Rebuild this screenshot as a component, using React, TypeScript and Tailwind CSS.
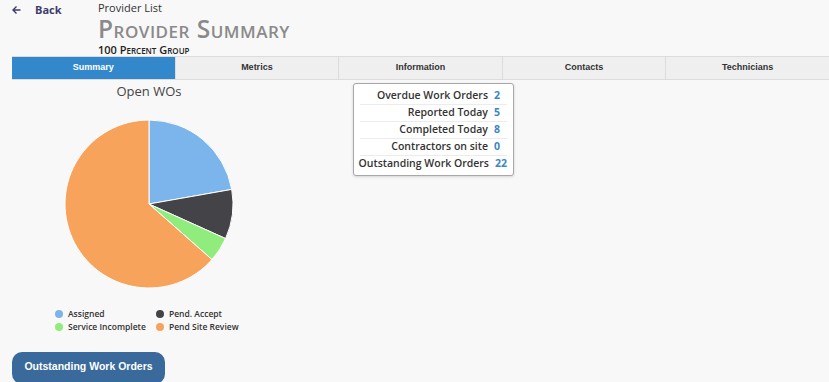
import React from "react";

type Slice = { label: string; value: number; color: string };

const slices: Slice[] = [
  { label: "Assigned", value: 14, color: "#7cb5ec" },
  { label: "Pend. Accept", value: 6, color: "#434348" },
  { label: "Service Incomplete", value: 3, color: "#90ed7d" },
  { label: "Pend Site Review", value: 40, color: "#f7a35c" },
];

const stats = [
  { label: "Overdue Work Orders", value: 2 },
  { label: "Reported Today", value: 5 },
  { label: "Completed Today", value: 8 },
  { label: "Contractors on site", value: 0 },
  { label: "Outstanding Work Orders", value: 22 },
];

const tabs = ["Summary", "Metrics", "Information", "Contacts", "Technicians"];

const PieChart: React.FC = () => {
  const cx = 90;
  const cy = 90;
  const r = 84;
  const total = slices.reduce((s, x) => s + x.value, 0);
  let start = 0;
  return (
    <svg width="180" height="180" viewBox="0 0 180 180">
      {slices.map((s) => {
        const a0 = (start / total) * Math.PI * 2;
        start += s.value;
        const a1 = (start / total) * Math.PI * 2;
        const x0 = cx + r * Math.sin(a0);
        const y0 = cy - r * Math.cos(a0);
        const x1 = cx + r * Math.sin(a1);
        const y1 = cy - r * Math.cos(a1);
        const large = a1 - a0 > Math.PI ? 1 : 0;
        return (
          <path
            key={s.label}
            d={`M${cx},${cy} L${x0},${y0} A${r},${r} 0 ${large} 1 ${x1},${y1} Z`}
            fill={s.color}
            stroke="#ffffff"
            strokeWidth={1}
            strokeLinejoin="round"
          />
        );
      })}
    </svg>
  );
};

const App: React.FC = () => {
  return (
    <div className="w-[829px] h-[382px] overflow-hidden bg-[#f8f8f8] font-['Open_Sans',sans-serif] text-[#333]">
      {/* header */}
      <div className="flex h-[56px]">
        <div className="w-[98px] pl-[12px] pt-[3px] flex items-start gap-[14px] text-[#3d3d6b] font-bold text-[11px] leading-[14px]">
          <svg width="9" height="14" viewBox="0 0 9 14" className="shrink-0">
            <path d="M8.5 7H1M4.5 3.5L1 7l3.5 3.5" fill="none" stroke="#3d3d6b" strokeWidth="1.4" />
          </svg>
          <span>Back</span>
        </div>
        <div className="flex flex-col">
          <span className="text-[11px] leading-[15px]">Provider List</span>
          <span className="mt-[2px] text-[24.5px] leading-[24px] text-[#8a8a8a] [font-variant:small-caps] font-semibold tracking-[0.5px]">
            Provider Summary
          </span>
          <span className="mt-[2px] text-[11px] leading-[13px] [font-variant:small-caps] font-semibold text-[#222]">
            100 Percent Group
          </span>
        </div>
      </div>

      {/* tabs */}
      <div className="ml-3 flex h-[24px] border-y border-[#dcdcdc] font-['Liberation_Sans',sans-serif] text-[9px] font-bold">
        {tabs.map((t, i) => (
          <div
            key={t}
            className={
              i === 0
                ? "flex-1 flex items-center justify-center bg-[#3388cc] text-white"
                : "flex-1 flex items-center justify-center bg-[#efefef] text-[#333] border-l border-[#dcdcdc]"
            }
          >
            {t}
          </div>
        ))}
      </div>

      {/* content */}
      <div className="flex">
        <div className="ml-3 w-[274px] flex flex-col items-center pt-[2px]">
          <span className="text-[13px] leading-[18px] text-[#444]">Open WOs</span>
          <div className="mt-[14px]">
            <PieChart />
          </div>
          <div className="mt-[13px] w-full pl-[43px] grid grid-cols-[101px_auto] text-[8.5px] font-semibold leading-[13px] text-[#333]">
            {slices.map((s) => (
              <div key={s.label} className="flex items-center gap-[5px]">
                <span
                  className="inline-block w-[8px] h-[8px] rounded-full"
                  style={{ backgroundColor: s.color }}
                />
                <span>{s.label}</span>
              </div>
            ))}
          </div>
        </div>

        <div className="ml-[67px] mt-[3px] self-start w-[161px] border border-[#a8a8a8] rounded-[3px] bg-white shadow-[0_1px_3px_rgba(0,0,0,0.15)] px-[6px] py-[3px]">
          {stats.map((s, i) => (
            <div
              key={s.label}
              className={
                i === 0
                  ? "flex justify-end items-center h-[17px] text-[10.5px] font-semibold whitespace-nowrap"
                  : "flex justify-end items-center h-[17px] text-[10.5px] font-semibold whitespace-nowrap border-t border-[#ececec]"
              }
            >
              <span className="text-[#333]">{s.label}</span>
              <span className="w-[19px] pl-[6px] font-bold text-[#3a87c4]">{s.value}</span>
            </div>
          ))}
        </div>
      </div>

      {/* button */}
      <div className="ml-3 mt-[19px]">
        <button className="w-[153px] h-[32px] rounded-[10px] bg-[#3a6a9c] text-white text-[10.5px] font-bold font-['Liberation_Sans',sans-serif] pb-[2px]">
          Outstanding Work Orders
        </button>
      </div>
    </div>
  );
};

export default App;
